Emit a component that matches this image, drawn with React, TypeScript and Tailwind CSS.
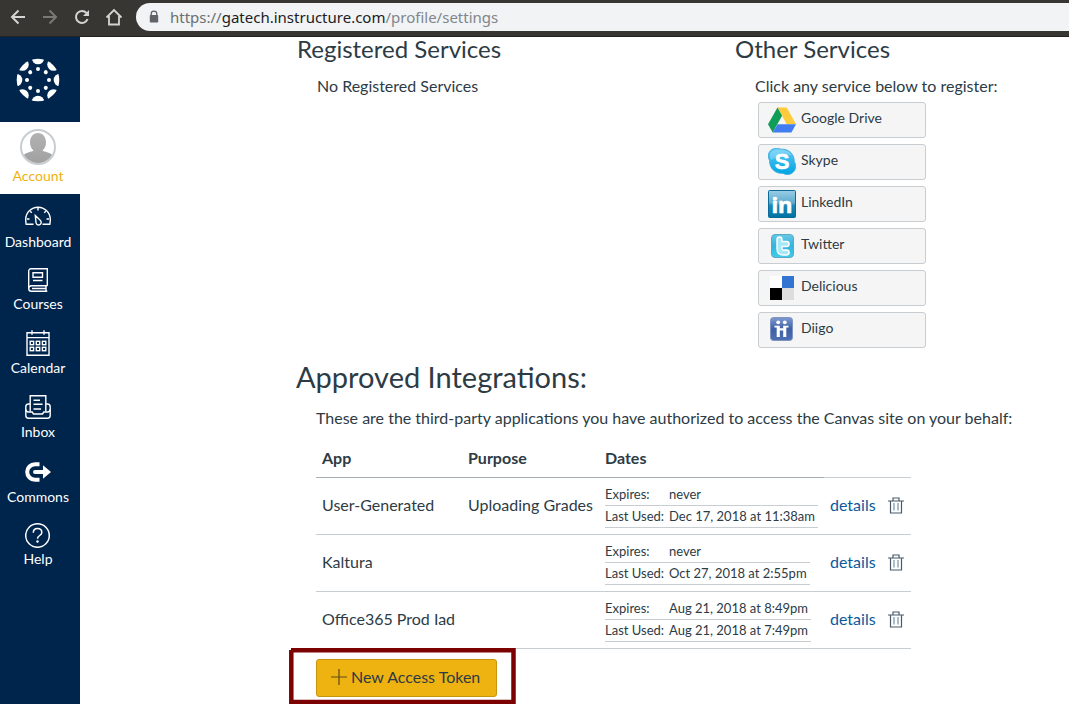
import React from "react";

const ANGLES = [0, 45, 90, 135, 180, 225, 270, 315];

function CanvasLogo() {
  return (
    <svg viewBox="-22 -22 44 44" className="size-11 fill-white" aria-hidden="true">
      <clipPath id="logo-disc">
        <circle r="21.3" />
      </clipPath>
      <g clipPath="url(#logo-disc)">
        {ANGLES.map((a) => (
          <circle key={a} cy="-22" r="6.3" transform={`rotate(${a})`} />
        ))}
      </g>
      {ANGLES.map((a) => (
        <circle key={a} cy="-11" r="2" transform={`rotate(${a})`} />
      ))}
    </svg>
  );
}

function Avatar() {
  return (
    <svg viewBox="0 0 36 36" className="size-9" aria-hidden="true">
      <defs>
        <clipPath id="avatar-disc">
          <circle cx="18" cy="18" r="16" />
        </clipPath>
        <linearGradient id="avatar-fill" x1="0" y1="0" x2="0" y2="1">
          <stop offset="0" stopColor="#b2b2b2" />
          <stop offset="1" stopColor="#a0a0a0" />
        </linearGradient>
      </defs>
      <circle cx="18" cy="18" r="17" fill="#fff" stroke="#c7cdd1" strokeWidth="2" />
      <g clipPath="url(#avatar-disc)" fill="url(#avatar-fill)">
        <path d="M18 4c5 0 8 4.200 8 9.500 0 3.500-1.500 6.500-3.500 8 1 1.500 9 1.500 11 6V36H2.500v-8.500c2-4.500 10-4.500 11-6-2-1.500-3.500-4.500-3.500-8C10 8.200 13 4 18 4z" />
      </g>
    </svg>
  );
}

const line = "fill-none stroke-white";

function DashboardIcon() {
  return (
    <svg viewBox="0 0 26 20" className={`h-5 w-[26px] ${line}`} strokeWidth="1.400" aria-hidden="true">
      <path d="M8.500 18.300H1.200C.9 17 .7 15.500.7 13.500a12.300 12.300 0 0 1 24.600 0c0 2-.2 3.500-.5 4.800h-7.300" />
      <path d="M10.300 9.500l4.900 4.800a2.600 2.600 0 1 1-4.200 2.200z" />
      <path d="M13 2v2.500M5.200 5.200l1.600 1.600M20.800 5.200l-1.600 1.600M2 13h2.500M24 13h-2.500" />
    </svg>
  );
}

function CoursesIcon() {
  return (
    <svg viewBox="0 0 20 24" className={`h-6 w-5 ${line}`} strokeWidth="1.400" aria-hidden="true">
      <path d="M19.300 17.700V.7H3A2.300 2.300 0 0 0 .7 3v17.500A2.800 2.800 0 0 0 3.500 23.300h15.800M19.300 17.700H3.500A2.700 2.700 0 0 0 .8 20.400M18 17.700v5.600M4 20.500h14" />
      <path d="M5 4.700h9.500v4.600H5zM5 12.500h9.500" />
    </svg>
  );
}

function CalendarIcon() {
  return (
    <svg viewBox="0 0 24 26" className={`h-[26px] w-6 ${line}`} strokeWidth="1.400" aria-hidden="true">
      <path d="M1 2.800h22v22.400H1zM1 7.600h22M6 .3v4.500M18 .3v4.500" />
      {[4.200, 10.300, 16.400].map((x) =>
        [11.300, 17.300].map((y) => <rect key={`${x}-${y}`} x={x} y={y} width="3.400" height="3.400" />),
      )}
    </svg>
  );
}

function InboxIcon() {
  return (
    <svg viewBox="0 0 26 24" className={`h-6 w-[26px] ${line}`} strokeWidth="1.400" aria-hidden="true">
      <path d="M5.200 16.500V.8h15.600v15.700M5 9H3.500C1.500 9 .8 10.500.8 12v8.500c0 1.800 1 2.700 2.700 2.700h19c1.700 0 2.700-.9 2.700-2.700V12c0-1.500-.7-3-2.700-3H21" />
      <path d="M1 14.500c0 1.600.8 2.500 2.500 2.500h3.700l1.300 2h9l1.300-2h3.700c1.700 0 2.500-.9 2.500-2.500" />
      <path d="M8.500 5.200h6.500M8.500 9.200h9M8.500 14h7.500" />
    </svg>
  );
}

function CommonsIcon() {
  return (
    <svg viewBox="0 0 26 20" className="h-5 w-[26px]" aria-hidden="true">
      <path d="M14.500 2.200H10a7.800 7.800 0 0 0 0 15.600h4.500" fill="none" stroke="#fff" strokeWidth="4" />
      <path d="M10 8h8V3.200L26 10l-8 6.800V12h-8a2 2 0 0 1 0-4z" fill="#fff" />
    </svg>
  );
}

function HelpIcon() {
  return (
    <svg viewBox="0 0 26 26" className={`size-[26px] ${line}`} strokeWidth="1.500" aria-hidden="true">
      <circle cx="12.500" cy="13.500" r="11.800" />
      <path d="M8.300 10.800c0-2.600 1.700-4.300 4.200-4.300s4.300 1.600 4.300 3.900c0 3.200-4.300 3-4.300 6.300" />
      <circle cx="12.500" cy="19.500" r="1" className="fill-white" strokeWidth="0.600" />
    </svg>
  );
}

const NAV = [
  { label: "Dashboard", Icon: DashboardIcon, box: "h-[30px]" },
  { label: "Courses", Icon: CoursesIcon, box: "h-[26px]" },
  { label: "Calendar", Icon: CalendarIcon, box: "h-7" },
  { label: "Inbox", Icon: InboxIcon, box: "h-7" },
  { label: "Commons", Icon: CommonsIcon, box: "h-[29px]" },
  { label: "Help", Icon: HelpIcon, box: "h-[26px]" },
];

function Sidebar() {
  return (
    <nav className="w-20 shrink-0 bg-[#00254c] text-sm leading-5 text-white" aria-label="Global navigation">
      <a href="#home" aria-label="Canvas home" className="flex h-[85px] items-center justify-center pr-1">
        <CanvasLogo />
      </a>
      <a href="#account" className="flex h-[72px] flex-col items-center bg-white pt-[7px] pr-1 text-[#eeb211]">
        <Avatar />
        <span className="mt-px">Account</span>
      </a>
      {NAV.map(({ label, Icon, box }) => (
        <a key={label} href={`#${label.toLowerCase()}`} className="flex flex-col items-center py-2 pr-1">
          <span className={`flex items-center pb-0.5 ${box}`}>
            <Icon />
          </span>
          <span>{label}</span>
        </a>
      ))}
    </nav>
  );
}

function BrowserBar() {
  const btn = "flex size-8 items-center justify-center";
  const icon = "size-4 fill-none stroke-current";
  return (
    <header className="flex h-[37px] shrink-0 items-center border-b border-[#242220] bg-[#383632] pb-0.5 pl-0.5 text-[#d5d4d2]">
      <button type="button" aria-label="Back" className={btn}>
        <svg viewBox="0 0 16 16" className={icon} strokeWidth="2"><path d="M15 8H2M8.500 1.500L2 8l6.500 6.500" /></svg>
      </button>
      <button type="button" aria-label="Forward" className={`${btn} text-[#7b7976]`}>
        <svg viewBox="0 0 16 16" className={icon} strokeWidth="2"><path d="M1 8h13M7.500 1.500L14 8l-6.500 6.500" /></svg>
      </button>
      <button type="button" aria-label="Reload" className={btn}>
        <svg viewBox="0 0 16 16" className={icon} strokeWidth="2"><path d="M13.600 10A6 6 0 1 1 12.500 4" /><path d="M15 1v6H9z" fill="currentColor" stroke="none" /></svg>
      </button>
      <button type="button" aria-label="Home" className={btn}>
        <svg viewBox="0 0 18 18" className="size-[18px] fill-none stroke-current" strokeWidth="1.800"><path d="M1.500 9.500L9 2l7.500 7.500M4 8v8.500h10V8" /></svg>
      </button>
      <div className="ml-1.5 flex h-7 grow items-center rounded-l-full bg-[#f1f3f4] pl-[13px]">
        <svg viewBox="0 0 10 14" className="h-3.5 w-2.5" aria-hidden="true">
          <path d="M2.200 6V4a2.800 2.800 0 0 1 5.600 0v2" fill="none" stroke="#5f6368" strokeWidth="1.300" />
          <rect x="0.800" y="5" width="8.400" height="7.500" rx="0.800" fill="#5f6368" />
        </svg>
        <span className="ml-[11px] pb-px font-['Noto_Sans',sans-serif] text-[15px] leading-5 text-[#80868b]">
          <span className="text-[#6a6f73]">https://</span>
          <span className="text-[#202124]">gatech.instructure.com</span>/profile/settings
        </span>
      </div>
    </header>
  );
}

function DriveLogo() {
  return (
    <svg viewBox="0 0 28 28" className="size-7" aria-hidden="true">
      <path d="M9.500 1.500h9.200L28 18.200h-9.300z" fill="#fdcb3c" />
      <path d="M9.500 1.500l4.600 8.200L4.700 26.500 0 18.200z" fill="#109d58" />
      <path d="M9.600 18.200H28l-4.600 8.300H4.700z" fill="#3f7df0" />
    </svg>
  );
}

function SkypeLogo() {
  return (
    <svg viewBox="0 1 28 28" className="size-7" aria-hidden="true">
      <defs>
        <linearGradient id="skype" x1="0" y1="0" x2="0" y2="1">
          <stop offset="0" stopColor="#5cc9f5" />
          <stop offset="1" stopColor="#00a4e4" />
        </linearGradient>
      </defs>
      <path d="M8 1.400c2.200 0 3.800.3 5 .8C20.500 1.500 26.500 7 26.300 14.800c1 1.500 1.300 3 1.300 4.500 0 4.600-3.600 8.200-8 8.200-1.800 0-3.300-.4-4.700-1.200C7 27 1.300 21 1.600 13.600.8 12.200.4 10.600.4 8.600.4 4.600 3.600 1.400 8 1.400z" fill="url(#skype)" stroke="#2ba6dc" strokeWidth="0.800" />
      <path d="M8 2.500c5 0 12 0 16 5.500-6-1-14 0-21 5C.5 8 2.500 3 8 2.500z" fill="#fff" opacity="0.250" />
      <text x="14" y="22.300" textAnchor="middle" className="fill-white stroke-white font-['Liberation_Sans',sans-serif] font-bold" strokeWidth="0.600" fontSize="22">S</text>
    </svg>
  );
}

function LinkedInLogo() {
  return (
    <svg viewBox="0 0 28 28" className="size-7" aria-hidden="true">
      <defs>
        <linearGradient id="linkedin" x1="0" y1="0" x2="0" y2="1">
          <stop offset="0" stopColor="#9acde4" />
          <stop offset="0.450" stopColor="#5fadd0" />
          <stop offset="0.550" stopColor="#2187b4" />
          <stop offset="1" stopColor="#0072a4" />
        </linearGradient>
      </defs>
      <rect x="0.500" y="0.500" width="27" height="27" rx="1" fill="url(#linkedin)" stroke="#0b6a96" />
      <text x="14" y="22.500" textAnchor="middle" className="fill-white stroke-white font-['Open_Sans',sans-serif] leading-none font-bold" strokeWidth="0.600" fontSize="22">in</text>
    </svg>
  );
}

function TwitterLogo() {
  return (
    <svg viewBox="0 0 28 28" className="size-7" aria-hidden="true">
      <defs>
        <linearGradient id="twitter" x1="0" y1="0" x2="0" y2="1">
          <stop offset="0" stopColor="#65c8e8" />
          <stop offset="0.500" stopColor="#35b3dc" />
          <stop offset="1" stopColor="#3fcdea" />
        </linearGradient>
      </defs>
      <rect x="3.500" y="2.500" width="22" height="23" rx="3.500" fill="url(#twitter)" stroke="#5aa9c4" />
      <path d="M11.500 7.500v9.200c0 2.600 1.400 3.800 3.800 3.800h3.300M11.500 12h7.100" fill="none" stroke="#fff" strokeWidth="6.400" strokeLinecap="round" strokeLinejoin="round" />
      <path d="M11.500 7.500v9.200c0 2.600 1.400 3.800 3.800 3.800h3.300M11.500 12h7.100" fill="none" stroke="#a5e8f7" strokeWidth="3.600" strokeLinecap="round" strokeLinejoin="round" />
    </svg>
  );
}

function DeliciousLogo() {
  return (
    <svg viewBox="0 0 28 28" className="size-7" aria-hidden="true">
      <path d="M2 2h12v12H2z" fill="#fff" />
      <path d="M14 2h12v12H14z" fill="#3274d1" />
      <path d="M2 14h12v12H2z" fill="#000" />
      <path d="M14 14h12v12H14z" fill="#ddd" />
    </svg>
  );
}

function DiigoLogo() {
  return (
    <svg viewBox="0 1 28 28" className="size-7" aria-hidden="true">
      <defs>
        <linearGradient id="diigo" x1="0" y1="0" x2="0" y2="1">
          <stop offset="0" stopColor="#7f9bd0" />
          <stop offset="0.500" stopColor="#3f5fa6" />
          <stop offset="1" stopColor="#4f6fb2" />
        </linearGradient>
      </defs>
      <rect x="2.500" y="2.500" width="22" height="23" rx="3" fill="url(#diigo)" stroke="#7d93c0" />
      <g fill="#fff">
        <circle cx="10.200" cy="7.300" r="1.900" />
        <circle cx="16.800" cy="7.300" r="1.900" />
        <path d="M6.500 10.700h5.300v2.600h3.400v-2.600h5.300v1.700h-2.200V22h-3.100v-6.500h-3.400V22H8.700v-9.600H6.500z" />
      </g>
    </svg>
  );
}

const SERVICES = [
  { name: "Google Drive", Logo: DriveLogo },
  { name: "Skype", Logo: SkypeLogo },
  { name: "LinkedIn", Logo: LinkedInLogo },
  { name: "Twitter", Logo: TwitterLogo },
  { name: "Delicious", Logo: DeliciousLogo },
  { name: "Diigo", Logo: DiigoLogo },
];

const INTEGRATIONS = [
  { app: "User-Generated", purpose: "Uploading Grades", expires: "never", used: "Dec 17, 2018 at 11:38am" },
  { app: "Kaltura", purpose: "", expires: "never", used: "Oct 27, 2018 at 2:55pm" },
  { app: "Office365 Prod Iad", purpose: "", expires: "Aug 21, 2018 at 8:49pm", used: "Aug 21, 2018 at 7:49pm" },
];

function TrashIcon() {
  return (
    <svg viewBox="0 0 16 17" className="h-[17px] w-4 fill-none stroke-[#4a5a68]" strokeWidth="1.200" aria-hidden="true">
      <path d="M0 4h16M5 4V1h6v3M2.500 4v12h11V4" />
      <path d="M6 6v7.500M10 6v7.500" className="stroke-[#7790a8]" />
    </svg>
  );
}

function IntegrationsTable() {
  const th = "h-[38px] border-b border-[#a5afb5] px-1.5 pb-0.5 font-bold";
  const cell = "border-b border-[#c7cdd1] px-1.5 pt-1.5 pb-2 whitespace-nowrap";
  return (
    <table className="w-[595px] table-fixed border-separate border-spacing-0 text-left leading-6">
      <colgroup>
        <col className="w-[146px]" />
        <col className="w-[137px]" />
        <col className="w-[225px]" />
        <col className="w-[87px]" />
      </colgroup>
      <thead>
        <tr>
          <th scope="col" className={th}>App</th>
          <th scope="col" className={th}>Purpose</th>
          <th scope="col" className={th}>Dates</th>
          <td className="border-b border-[#c7cdd1]" />
        </tr>
      </thead>
      <tbody>
        {INTEGRATIONS.map((row) => (
          <tr key={row.app}>
            <td className={cell}>{row.app}</td>
            <td className={cell}>{row.purpose}</td>
            <td className="border-b border-[#c7cdd1] py-1.5 pl-1.5">
              <table className="border-separate border-spacing-0 text-[13px] leading-5 whitespace-nowrap">
                <tbody>
                  <tr className="*:border-b *:border-[#c7cdd1] *:pb-px">
                    <td className="w-16 min-w-16">Expires:</td>
                    <td className="pr-[3px]">{row.expires}</td>
                  </tr>
                  <tr className="*:border-b *:border-[#c7cdd1] *:pb-px">
                    <td>Last Used:</td>
                    <td className="pr-[3px]">{row.used}</td>
                  </tr>
                </tbody>
              </table>
            </td>
            <td className={cell}>
              <div className="flex items-center gap-3">
                <a href="#details" className="text-[#0a5a9e]">details</a>
                <button type="button" aria-label={`Delete ${row.app}`}>
                  <TrashIcon />
                </button>
              </div>
            </td>
          </tr>
        ))}
      </tbody>
    </table>
  );
}

export default function App() {
  return (
    <div className="flex min-h-screen flex-col bg-white font-[Lato,sans-serif] text-base text-[#2d3b45]">
      <BrowserBar />
      <div className="flex grow">
        <Sidebar />
        <main className="min-w-0 grow pl-[216px]">
          <div className="flex">
            <section className="w-[438px] shrink-0 pl-px">
              <h2 className="text-2xl leading-6">Registered Services</h2>
              <p className="mt-[13px] pl-5 leading-6">No Registered Services</p>
            </section>
            <section className="grow pl-px">
              <h2 className="text-2xl leading-6">Other Services</h2>
              <p className="mt-[13px] pl-5 leading-6">Click any service below to register:</p>
              <ul className="mt-1 ml-[23px] flex w-[168px] flex-col gap-1.5">
                {SERVICES.map(({ name, Logo }) => (
                  <li key={name}>
                    <a href="#service" className="flex h-9 items-center gap-[5px] rounded-[3px] border border-[#c7cdd1] bg-[#f5f5f5] pl-[9px] text-sm leading-5">
                      <Logo />
                      <span className="pb-1">{name}</span>
                    </a>
                  </li>
                ))}
              </ul>
            </section>
          </div>
          <section>
            <h1 className="mt-[11px] text-[29px] leading-9">Approved Integrations:</h1>
            <div className="pl-5">
              <p className="mt-[11px] mb-2.5 leading-6 whitespace-nowrap">
                These are the third-party applications you have authorized to access the Canvas site on your behalf:
              </p>
              <IntegrationsTable />
              <div className="relative mt-2.5 mb-[7px] w-fit">
                <button type="button" className="flex h-[38px] items-center gap-1 rounded-[3px] border border-[#c9950c] bg-[#eeb211] pr-4 pb-0.5 pl-3.5">
                  <svg viewBox="0 0 16 16" className="size-4 fill-none stroke-[#5c4a1c]" strokeWidth="1.200" aria-hidden="true">
                    <path d="M8 0v16M0 8h16" />
                  </svg>
                  New Access Token
                </button>
                <svg viewBox="0 0 227 56" className="pointer-events-none absolute -top-[11px] -left-[27px] h-14 w-[227px] max-w-none fill-none stroke-[#7c0202]" strokeWidth="4.500" aria-hidden="true">
                  <path d="M2 2.300H224.500V54H2.300V2" />
                </svg>
              </div>
            </div>
          </section>
        </main>
      </div>
    </div>
  );
}
